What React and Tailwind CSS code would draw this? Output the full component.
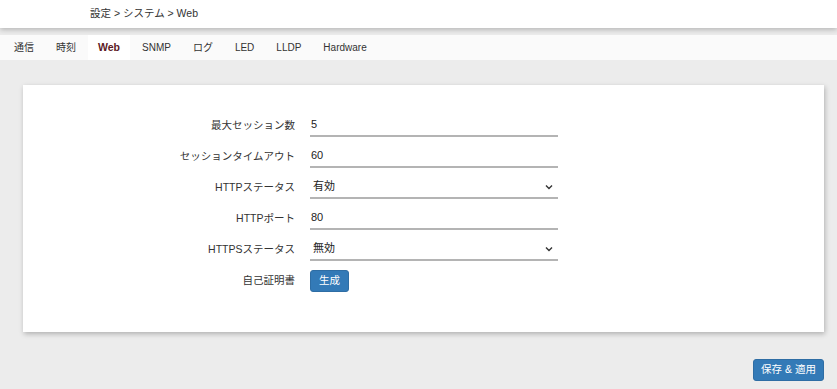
const font = { fontFamily: '"Liberation Sans", "Noto Sans CJK JP", sans-serif' };

const tabs = ["通信", "時刻", "Web", "SNMP", "ログ", "LED", "LLDP", "Hardware"];

const Chevron = () => (
  <svg width="8" height="6" viewBox="0 0 8 6" className="mr-[5px]">
    <polyline points="1,1.5 4,4.5 7,1.5" fill="none" stroke="#333" strokeWidth="1.4" />
  </svg>
);

const Row = ({ label, children }) => (
  <div className="flex items-center h-[24px]">
    <div className="w-[272px] text-right text-[10.5px] text-[#333] pt-[2px]">{label}</div>
    <div className="ml-[15px] w-[248px]">{children}</div>
  </div>
);

const Field = ({ value, select }) => (
  <div className="h-[24px] flex items-center justify-between border-b-2 border-[#b4b4b4] pl-[1px] pt-[1px] text-[11px] text-[#222]">
    <span className={select ? "pl-[2px]" : ""}>{value}</span>
    {select && <Chevron />}
  </div>
);

export default function App() {
  return (
    <div className="w-[837px] h-[389px] bg-[#ececec] overflow-hidden" style={font}>
      <div className="relative z-10 h-[28px] bg-white shadow-[0_2px_5px_rgba(0,0,0,0.22)] flex items-center pl-[90px] text-[10.5px] text-[#333]">
        設定 &gt; システム &gt; Web
      </div>
      <div className="mt-[7px] h-[25px] bg-[#fafafa] flex pl-[4px] gap-[2px]">
        {tabs.map((t) => (
          <div
            key={t}
            className={
              t === "Web"
                ? "px-[10px] flex items-center bg-white text-[10.5px] font-bold text-[#5b1a24]"
                : "px-[10px] flex items-center text-[10px] text-[#333]"
            }
          >
            {t}
          </div>
        ))}
      </div>

      <div className="ml-[23px] mr-[13px] mt-[25px] bg-white shadow-[1px_2px_5px_rgba(0,0,0,0.25)] pt-[28px] pb-[40px] flex flex-col gap-[7px]">
        <Row label="最大セッション数"><Field value="5" /></Row>
        <Row label="セッションタイムアウト"><Field value="60" /></Row>
        <Row label="HTTPステータス"><Field value="有効" select /></Row>
        <Row label="HTTPポート"><Field value="80" /></Row>
        <Row label="HTTPSステータス"><Field value="無効" select /></Row>
        <div className="flex items-center h-[22px] mt-[2px]">
          <div className="w-[272px] text-right text-[10.5px] text-[#333]">自己証明書</div>
          <button className="ml-[15px] w-[39px] h-[22px] bg-[#337ab7] border border-[#2e6da4] rounded-[3px] text-white text-[10.5px]">
            生成
          </button>
        </div>
      </div>

      <div className="flex justify-end mr-[13px] mt-[27px]">
        <button className="w-[71px] h-[22px] bg-[#337ab7] border border-[#2e6da4] rounded-[3px] text-white text-[10.5px]">
          保存 &amp; 適用
        </button>
      </div>
    </div>
  );
}
